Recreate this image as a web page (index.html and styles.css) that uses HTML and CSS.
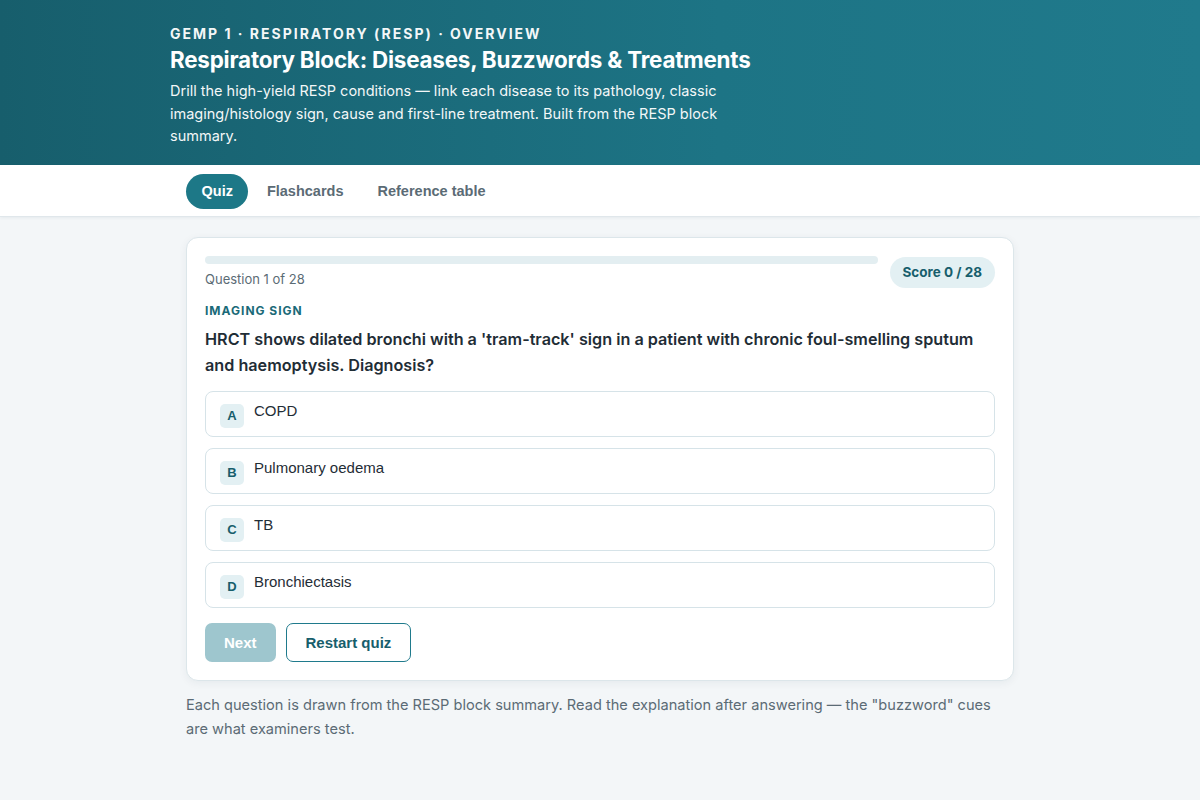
FILE: index.html
```html
<!DOCTYPE html>
<html lang="en">
<head>
  <meta charset="UTF-8" />
  <meta name="viewport" content="width=device-width, initial-scale=1.0"/>
  <title>RESP block quiz</title>
  <link rel="stylesheet" href="styles.css">
</head>
<body>
  <header class="hero">
    <div class="wrap">
      <div class="eyebrow">GEMP 1 · Respiratory (RESP) · Overview</div>
      <h1 class="hero-title">Respiratory Block: Diseases, Buzzwords &amp; Treatments</h1>
      <p class="hero-text">Drill the high-yield RESP conditions — link each disease to its pathology, classic imaging/histology sign, cause and first-line treatment. Built from the RESP block summary.</p>
    </div>
  </header>

  <nav class="tabs">
    <div class="wrap tabs-inner">
      <button class="tab active">Quiz</button>
      <button class="tab">Flashcards</button>
      <button class="tab">Reference table</button>
    </div>
  </nav>

  <main class="wrap main">
    <section class="card">
      <div class="card-top">
        <div class="progress">
          <div class="progress-track"><div class="progress-fill" style="width: 0%"></div></div>
          <div class="progress-label">Question 1 of 28</div>
        </div>
        <div class="score">Score 0 / 28</div>
      </div>

      <div class="category">Imaging sign</div>
      <h2 class="question">HRCT shows dilated bronchi with a 'tram-track' sign in a patient with chronic foul-smelling sputum and haemoptysis. Diagnosis?</h2>

      <div class="options">
        <button class="option"><span class="letter">A</span><span class="option-text">COPD</span></button>
        <button class="option"><span class="letter">B</span><span class="option-text">Pulmonary oedema</span></button>
        <button class="option"><span class="letter">C</span><span class="option-text">TB</span></button>
        <button class="option"><span class="letter">D</span><span class="option-text">Bronchiectasis</span></button>
      </div>

      <div class="actions">
        <button class="btn btn-primary" disabled>Next</button>
        <button class="btn btn-outline">Restart quiz</button>
      </div>
    </section>

    <p class="note">Each question is drawn from the RESP block summary. Read the explanation after answering — the "buzzword" cues are what examiners test.</p>
  </main>
</body>
</html>
```

FILE: styles.css
```css
body {
  margin: 0;
  background: #f3f6f8;
  font-family: Inter, "Noto Sans", sans-serif;
  color: #1f2d36;
}
.wrap {
  max-width: 860px;
  margin: 0 auto;
}

/* header */
.hero {
  background: linear-gradient(90deg, #175e6c 0%, #1d7485 60%, #207a8c 100%);
  color: #fff;
  padding: 25px 0 17px;
}
.eyebrow {
  font-size: 14px;
  font-weight: 700;
  text-transform: uppercase;
  letter-spacing: 2px;
  line-height: 18px;
  opacity: 0.95;
}
.hero-title {
  margin: 3px 0 6px;
  font-size: 22.4px;
  font-weight: 700;
  line-height: 28px;
  letter-spacing: -0.2px;
}
.hero-text {
  margin: 0;
  max-width: 600px;
  font-size: 14.5px;
  line-height: 22.5px;
  opacity: 0.95;
}

/* tabs */
.tabs {
  background: #fff;
  border-bottom: 1px solid #e0e7eb;
  box-shadow: 0 1px 3px rgba(20, 50, 60, 0.06);
}
.tabs-inner {
  display: flex;
  gap: 3px;
  padding: 9px 16px 7px;
  box-sizing: border-box;
}
.tab {
  font-family: "Liberation Sans", Arial, sans-serif;
  font-size: 14.5px;
  font-weight: 700;
  color: #5b6b75;
  background: none;
  border: none;
  border-radius: 18px;
  padding: 0 15.5px;
  height: 35px;
  cursor: pointer;
}
.tab.active {
  background: #1d7887;
  color: #fff;
}

/* quiz card */
.main {
  padding: 20px 16px 40px;
  box-sizing: border-box;
}
.card {
  background: #fff;
  border: 1px solid #dce6ea;
  border-radius: 12px;
  box-shadow: 0 2px 8px rgba(20, 50, 60, 0.06);
  padding: 18px;
}
.card-top {
  display: flex;
  align-items: flex-start;
  gap: 12px;
}
.progress {
  flex: 1;
}
.progress-track {
  height: 8px;
  background: #e3eef1;
  border-radius: 4px;
  overflow: hidden;
}
.progress-fill {
  height: 100%;
  background: #1d7887;
}
.progress-label {
  margin-top: 7px;
  font-size: 13px;
  color: #5b6b75;
}
.score {
  margin-top: 1px;
  background: #e3f0f3;
  color: #175e6c;
  font-size: 13.5px;
  font-weight: 700;
  border-radius: 16px;
  padding: 7px 13px;
  line-height: 17px;
}
.category {
  margin-top: 15px;
  font-size: 12px;
  font-weight: 700;
  letter-spacing: 1px;
  text-transform: uppercase;
  color: #1a6a78;
}
.question {
  margin: 8px 0 13px;
  font-size: 16.2px;
  font-weight: 600;
  line-height: 26px;
  color: #1f2d36;
}
.options {
  display: flex;
  flex-direction: column;
  gap: 11px;
}
.option {
  display: flex;
  align-items: flex-start;
  gap: 10px;
  height: 46px;
  padding: 10px 14px;
  box-sizing: border-box;
  background: #fff;
  border: 1px solid #d6e3e8;
  border-radius: 8px;
  text-align: left;
  cursor: pointer;
  font-family: "Liberation Sans", Arial, sans-serif;
  font-size: 15px;
  color: #1f2d36;
}
.letter {
  flex: none;
  width: 24px;
  height: 24px;
  margin-top: 2px;
  border-radius: 5px;
  background: #e3f0f3;
  color: #175e6c;
  font-size: 13px;
  font-weight: 700;
  display: flex;
  align-items: center;
  justify-content: center;
}
.option-text {
  line-height: 18px;
}
.actions {
  display: flex;
  gap: 10px;
  margin-top: 15px;
}
.btn {
  font-family: "Liberation Sans", Arial, sans-serif;
  font-size: 15px;
  font-weight: 700;
  height: 39px;
  padding: 0 19px;
  border-radius: 7px;
  cursor: pointer;
}
.btn-primary {
  background: #9ec6ce;
  color: #fff;
  border: none;
}
.btn-outline {
  background: #fff;
  color: #175e6c;
  border: 1px solid #1f7a8c;
}
.note {
  margin: 12px 0 0;
  font-size: 14.6px;
  line-height: 24px;
  color: #5b6b75;
}
```
